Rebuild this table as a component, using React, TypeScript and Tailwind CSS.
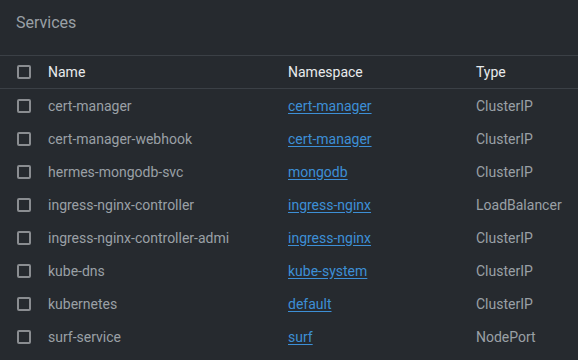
import React from "react";

const rows = [
  { name: "cert-manager", ns: "cert-manager", type: "ClusterIP" },
  { name: "cert-manager-webhook", ns: "cert-manager", type: "ClusterIP" },
  { name: "hermes-mongodb-svc", ns: "mongodb", type: "ClusterIP" },
  { name: "ingress-nginx-controller", ns: "ingress-nginx", type: "LoadBalancer" },
  { name: "ingress-nginx-controller-admi", ns: "ingress-nginx", type: "ClusterIP" },
  { name: "kube-dns", ns: "kube-system", type: "ClusterIP" },
  { name: "kubernetes", ns: "default", type: "ClusterIP" },
  { name: "surf-service", ns: "surf", type: "NodePort" },
];

function Box() {
  return (
    <span className="block w-[14px] h-[14px] rounded-[2px] border-2 border-[#8a8d91]" />
  );
}

export default function App() {
  return (
    <div
      className="w-[578px] h-[360px] overflow-hidden bg-[#262a2f] text-sm"
      style={{ fontFamily: "Roboto, 'Liberation Sans', sans-serif" }}
    >
      <div className="h-[55px] px-4 pt-[11px] text-base text-[#9aa0a6]">Services</div>
      <div className="grid grid-cols-[48px_240px_188px_1fr] h-[34px] items-center border-y border-[#3b4046] text-[#e8eaed]">
        <div className="pl-[17px]"><Box /></div>
        <div>Name</div>
        <div>Namespace</div>
        <div>Type</div>
      </div>
      {rows.map((r) => (
        <div
          key={r.name}
          className="grid grid-cols-[48px_240px_188px_1fr] h-[33px] items-center text-[#9aa0a6]"
        >
          <div className="pl-[17px]"><Box /></div>
          <div className="whitespace-nowrap overflow-hidden">{r.name}</div>
          <div>
            <a href="#" className="text-[#3d8fd6] underline underline-offset-2">{r.ns}</a>
          </div>
          <div>{r.type}</div>
        </div>
      ))}
    </div>
  );
}
